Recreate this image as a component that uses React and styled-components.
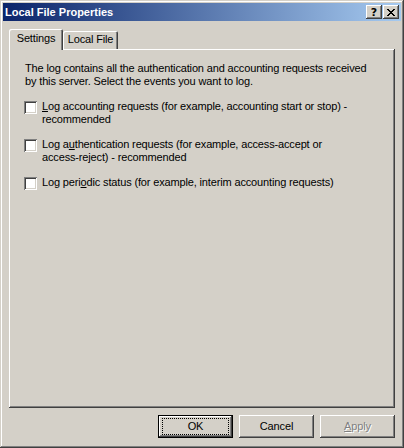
import styled, { createGlobalStyle } from 'styled-components';

const GlobalStyle = createGlobalStyle`
  html, body {
    margin: 0;
    padding: 0;
    background: #d4d0c8;
  }
  body {
    font-family: "Liberation Sans", Arial, sans-serif;
    font-size: 11px;
    color: #000;
  }
`;

const raised = `
  box-shadow:
    inset -1px -1px #404040,
    inset 1px 1px #fff,
    inset -2px -2px #808080,
    inset 2px 2px #d4d0c8;
`;

function App() {
  return (
    <>
      <GlobalStyle />
      <Window>
        <TitleBar>
          <Title>Local File Properties</Title>
          <CaptionButtons>
            <CaptionButton aria-label="Help">
              <HelpGlyph>?</HelpGlyph>
            </CaptionButton>
            <CaptionButton aria-label="Close">
              <svg width="8" height="7" viewBox="0 0 8 7" shapeRendering="crispEdges">
                <path d="M0 0h2v1H0zM6 0h2v1H6zM1 1h2v1H1zM5 1h2v1H5zM2 2h4v1H2zM3 3h2v1H3zM2 4h4v1H2zM1 5h2v1H1zM5 5h2v1H5zM0 6h2v1H0zM6 6h2v1H6z" fill="#000" />
              </svg>
            </CaptionButton>
          </CaptionButtons>
        </TitleBar>

        <Client>
          <TabStrip>
            <Tab $active $width={54}>Settings</Tab>
            <Tab $width={55}>Local File</Tab>
          </TabStrip>

          <Panel>
            <Intro>
              The log contains all the authentication and accounting requests received
              <br />
              by this server. Select the events you want to log.
            </Intro>

            <CheckList>
              <CheckRow>
                <Box />
                <Label>
                  <Key>L</Key>og accounting requests (for example, accounting start or stop) -
                  <br />
                  recommended
                </Label>
              </CheckRow>
              <CheckRow>
                <Box />
                <Label>
                  Log a<Key>u</Key>thentication requests (for example, access-accept or
                  <br />
                  access-reject) - recommended
                </Label>
              </CheckRow>
              <CheckRow>
                <Box />
                <Label>
                  Log peri<Key>o</Key>dic status (for example, interim accounting requests)
                </Label>
              </CheckRow>
            </CheckList>
          </Panel>

          <ButtonRow>
            <Button $default>
              <Focus>OK</Focus>
            </Button>
            <Button>Cancel</Button>
            <Button $disabled>
              <span>
                <Key>A</Key>pply
              </span>
            </Button>
          </ButtonRow>
        </Client>
      </Window>
    </>
  );
}

export default App;

const Window = styled.div`
  width: 404px;
  height: 448px;
  box-sizing: border-box;
  padding: 3px;
  display: flex;
  flex-direction: column;
  background: #d4d0c8;
  box-shadow:
    inset -1px -1px #404040,
    inset 1px 1px #d4d0c8,
    inset -2px -2px #808080,
    inset 2px 2px #fff;
`;

const TitleBar = styled.div`
  height: 18px;
  display: flex;
  align-items: center;
  justify-content: space-between;
  padding: 0 2px 0 2px;
  background: linear-gradient(to right, #0a246a, #a6caf0);
`;

const Title = styled.span`
  color: #fff;
  font-weight: bold;
  font-size: 11px;
  line-height: 13px;
`;

const CaptionButtons = styled.div`
  display: flex;
  gap: 1px;
`;

const CaptionButton = styled.div`
  width: 16px;
  height: 14px;
  display: flex;
  align-items: center;
  justify-content: center;
  background: #d4d0c8;
  ${raised}
`;

const HelpGlyph = styled.span`
  font-family: "DejaVu Sans", sans-serif;
  font-weight: bold;
  font-size: 11px;
  line-height: 11px;
`;

const Client = styled.div`
  flex: 1;
  display: flex;
  flex-direction: column;
  padding: 8px 6px 7px 6px;
  letter-spacing: -0.15px;
`;

const TabStrip = styled.div`
  height: 20px;
  display: flex;
  align-items: flex-end;
`;

const Tab = styled.div`
  position: relative;
  z-index: ${(p) => (p.$active ? 1 : 0)};
  box-sizing: border-box;
  width: ${(p) => p.$width}px;
  height: ${(p) => (p.$active ? '21px' : '18px')};
  margin-bottom: ${(p) => (p.$active ? '-1px' : '0')};
  padding-top: ${(p) => (p.$active ? '3px' : '2px')};
  text-align: center;
  line-height: 13px;
  background: #d4d0c8;
  border-radius: 2px 2px 0 0;
  box-shadow:
    inset 1px 1px #fff,
    inset -1px 0 #404040,
    inset -2px 0 #808080;
`;

const Panel = styled.div`
  flex: 1;
  box-sizing: border-box;
  padding: 13px 14px 0 15px;
  box-shadow:
    inset -1px -1px #404040,
    inset 1px 1px #fff,
    inset -2px -2px #808080;
`;

const Intro = styled.p`
  margin: 0 0 0 1px;
  line-height: 13px;
`;

const CheckList = styled.div`
  display: flex;
  flex-direction: column;
  gap: 12px;
  margin-top: 12px;
`;

const CheckRow = styled.div`
  display: flex;
  align-items: flex-start;
  gap: 5px;
`;

const Box = styled.span`
  flex: none;
  width: 13px;
  height: 13px;
  margin-top: 1px;
  background: #fff;
  box-shadow:
    inset 1px 1px #808080,
    inset -1px -1px #fff,
    inset 2px 2px #404040,
    inset -2px -2px #d4d0c8;
`;

const Label = styled.span`
  line-height: 13px;
`;

const Key = styled.span`
  text-decoration: underline;
  text-underline-offset: 1px;
`;

const ButtonRow = styled.div`
  display: flex;
  justify-content: flex-end;
  gap: 6px;
  margin-top: 7px;
`;

const Button = styled.div`
  width: 75px;
  height: 23px;
  box-sizing: border-box;
  display: flex;
  align-items: center;
  justify-content: center;
  line-height: 13px;
  background: #d4d0c8;
  color: ${(p) => (p.$disabled ? '#808080' : '#000')};
  text-shadow: ${(p) => (p.$disabled ? '1px 1px #fff' : 'none')};
  border: ${(p) => (p.$default ? '1px solid #000' : 'none')};
  ${raised}
`;

const Focus = styled.span`
  width: 63px;
  height: 13px;
  box-sizing: border-box;
  text-align: center;
  outline: 1px dotted #000;
  outline-offset: 1px;
`;
